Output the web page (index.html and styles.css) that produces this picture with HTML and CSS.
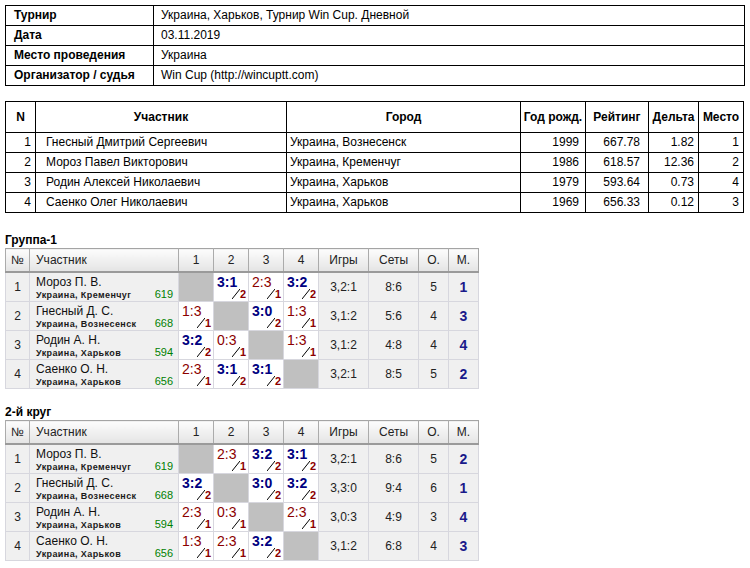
FILE: index.html
```html
<!DOCTYPE html>
<html lang="ru">
<head>
<meta charset="utf-8">
<title>Турнир Win Cup</title>
<link rel="stylesheet" href="styles.css">
</head>
<body>
<table class="info">
  <colgroup><col class="info-k"><col></colgroup>
  <tr><th>Турнир</th><td>Украина, Харьков, Турнир Win Cup. Дневной</td></tr>
  <tr><th>Дата</th><td>03.11.2019</td></tr>
  <tr><th>Место проведения</th><td>Украина</td></tr>
  <tr><th>Организатор / судья</th><td>Win Cup (http://wincuptt.com)</td></tr>
</table>

<table class="players">
  <colgroup>
    <col class="p-n"><col class="p-name"><col class="p-city"><col class="p-year"><col class="p-rate"><col class="p-delta"><col class="p-place">
  </colgroup>
  <tr><th>N</th><th>Участник</th><th>Город</th><th>Год рожд.</th><th>Рейтинг</th><th>Дельта</th><th>Место</th></tr>
  <tr><td class="n">1</td><td class="nm">Гнесный Дмитрий Сергеевич</td><td class="ct">Украина, Вознесенск</td><td class="yr">1999</td><td class="rt">667.78</td><td class="dl">1.82</td><td class="pl">1</td></tr>
  <tr><td class="n">2</td><td class="nm">Мороз Павел Викторович</td><td class="ct">Украина, Кременчуг</td><td class="yr">1986</td><td class="rt">618.57</td><td class="dl">12.36</td><td class="pl">2</td></tr>
  <tr><td class="n">3</td><td class="nm">Родин Алексей Николаевич</td><td class="ct">Украина, Харьков</td><td class="yr">1979</td><td class="rt">593.64</td><td class="dl">0.73</td><td class="pl">4</td></tr>
  <tr><td class="n">4</td><td class="nm">Саенко Олег Николаевич</td><td class="ct">Украина, Харьков</td><td class="yr">1969</td><td class="rt">656.33</td><td class="dl">0.12</td><td class="pl">3</td></tr>
</table>

<section class="group first">
  <h3 class="group-title">Группа-1</h3>
  <table class="rr">
    <colgroup>
      <col class="r-num"><col class="r-name"><col class="r-sc"><col class="r-sc"><col class="r-sc"><col class="r-sc"><col class="r-g"><col class="r-g"><col class="r-o"><col class="r-o">
    </colgroup>
    <thead>
      <tr><th>№</th><th class="h-name">Участник</th><th>1</th><th>2</th><th>3</th><th>4</th><th>Игры</th><th>Сеты</th><th>О.</th><th>М.</th></tr>
    </thead>
    <tbody>
      <tr>
        <td>1</td>
        <td class="c-name"><div class="pname">Мороз П. В.</div><div class="pinfo"><span class="city">Украина, Кременчуг</span><span class="rating">619</span></div></td>
        <td class="self"></td>
        <td class="sc win"><div class="score">3:1</div><div class="sets"><svg viewBox="0 0 8 10"><line x1="0" y1="10" x2="8" y2="0"/></svg><b>2</b></div></td>
        <td class="sc loss"><div class="score">2:3</div><div class="sets"><svg viewBox="0 0 8 10"><line x1="0" y1="10" x2="8" y2="0"/></svg><b>1</b></div></td>
        <td class="sc win"><div class="score">3:2</div><div class="sets"><svg viewBox="0 0 8 10"><line x1="0" y1="10" x2="8" y2="0"/></svg><b>2</b></div></td>
        <td>3,2:1</td><td>8:6</td><td>5</td><td class="place">1</td>
      </tr>
      <tr>
        <td>2</td>
        <td class="c-name"><div class="pname">Гнесный Д. С.</div><div class="pinfo"><span class="city">Украина, Вознесенск</span><span class="rating">668</span></div></td>
        <td class="sc loss"><div class="score">1:3</div><div class="sets"><svg viewBox="0 0 8 10"><line x1="0" y1="10" x2="8" y2="0"/></svg><b>1</b></div></td>
        <td class="self"></td>
        <td class="sc win"><div class="score">3:0</div><div class="sets"><svg viewBox="0 0 8 10"><line x1="0" y1="10" x2="8" y2="0"/></svg><b>2</b></div></td>
        <td class="sc loss"><div class="score">1:3</div><div class="sets"><svg viewBox="0 0 8 10"><line x1="0" y1="10" x2="8" y2="0"/></svg><b>1</b></div></td>
        <td>3,1:2</td><td>5:6</td><td>4</td><td class="place">3</td>
      </tr>
      <tr>
        <td>3</td>
        <td class="c-name"><div class="pname">Родин А. Н.</div><div class="pinfo"><span class="city">Украина, Харьков</span><span class="rating">594</span></div></td>
        <td class="sc win"><div class="score">3:2</div><div class="sets"><svg viewBox="0 0 8 10"><line x1="0" y1="10" x2="8" y2="0"/></svg><b>2</b></div></td>
        <td class="sc loss"><div class="score">0:3</div><div class="sets"><svg viewBox="0 0 8 10"><line x1="0" y1="10" x2="8" y2="0"/></svg><b>1</b></div></td>
        <td class="self"></td>
        <td class="sc loss"><div class="score">1:3</div><div class="sets"><svg viewBox="0 0 8 10"><line x1="0" y1="10" x2="8" y2="0"/></svg><b>1</b></div></td>
        <td>3,1:2</td><td>4:8</td><td>4</td><td class="place">4</td>
      </tr>
      <tr>
        <td>4</td>
        <td class="c-name"><div class="pname">Саенко О. Н.</div><div class="pinfo"><span class="city">Украина, Харьков</span><span class="rating">656</span></div></td>
        <td class="sc loss"><div class="score">2:3</div><div class="sets"><svg viewBox="0 0 8 10"><line x1="0" y1="10" x2="8" y2="0"/></svg><b>1</b></div></td>
        <td class="sc win"><div class="score">3:1</div><div class="sets"><svg viewBox="0 0 8 10"><line x1="0" y1="10" x2="8" y2="0"/></svg><b>2</b></div></td>
        <td class="sc win"><div class="score">3:1</div><div class="sets"><svg viewBox="0 0 8 10"><line x1="0" y1="10" x2="8" y2="0"/></svg><b>2</b></div></td>
        <td class="self"></td>
        <td>3,2:1</td><td>8:5</td><td>5</td><td class="place">2</td>
      </tr>
    </tbody>
  </table>
</section>

<section class="group second">
  <h3 class="group-title">2-й круг</h3>
  <table class="rr">
    <colgroup>
      <col class="r-num"><col class="r-name"><col class="r-sc"><col class="r-sc"><col class="r-sc"><col class="r-sc"><col class="r-g"><col class="r-g"><col class="r-o"><col class="r-o">
    </colgroup>
    <thead>
      <tr><th>№</th><th class="h-name">Участник</th><th>1</th><th>2</th><th>3</th><th>4</th><th>Игры</th><th>Сеты</th><th>О.</th><th>М.</th></tr>
    </thead>
    <tbody>
      <tr>
        <td>1</td>
        <td class="c-name"><div class="pname">Мороз П. В.</div><div class="pinfo"><span class="city">Украина, Кременчуг</span><span class="rating">619</span></div></td>
        <td class="self"></td>
        <td class="sc loss"><div class="score">2:3</div><div class="sets"><svg viewBox="0 0 8 10"><line x1="0" y1="10" x2="8" y2="0"/></svg><b>1</b></div></td>
        <td class="sc win"><div class="score">3:2</div><div class="sets"><svg viewBox="0 0 8 10"><line x1="0" y1="10" x2="8" y2="0"/></svg><b>2</b></div></td>
        <td class="sc win"><div class="score">3:1</div><div class="sets"><svg viewBox="0 0 8 10"><line x1="0" y1="10" x2="8" y2="0"/></svg><b>2</b></div></td>
        <td>3,2:1</td><td>8:6</td><td>5</td><td class="place">2</td>
      </tr>
      <tr>
        <td>2</td>
        <td class="c-name"><div class="pname">Гнесный Д. С.</div><div class="pinfo"><span class="city">Украина, Вознесенск</span><span class="rating">668</span></div></td>
        <td class="sc win"><div class="score">3:2</div><div class="sets"><svg viewBox="0 0 8 10"><line x1="0" y1="10" x2="8" y2="0"/></svg><b>2</b></div></td>
        <td class="self"></td>
        <td class="sc win"><div class="score">3:0</div><div class="sets"><svg viewBox="0 0 8 10"><line x1="0" y1="10" x2="8" y2="0"/></svg><b>2</b></div></td>
        <td class="sc win"><div class="score">3:2</div><div class="sets"><svg viewBox="0 0 8 10"><line x1="0" y1="10" x2="8" y2="0"/></svg><b>2</b></div></td>
        <td>3,3:0</td><td>9:4</td><td>6</td><td class="place">1</td>
      </tr>
      <tr>
        <td>3</td>
        <td class="c-name"><div class="pname">Родин А. Н.</div><div class="pinfo"><span class="city">Украина, Харьков</span><span class="rating">594</span></div></td>
        <td class="sc loss"><div class="score">2:3</div><div class="sets"><svg viewBox="0 0 8 10"><line x1="0" y1="10" x2="8" y2="0"/></svg><b>1</b></div></td>
        <td class="sc loss"><div class="score">0:3</div><div class="sets"><svg viewBox="0 0 8 10"><line x1="0" y1="10" x2="8" y2="0"/></svg><b>1</b></div></td>
        <td class="self"></td>
        <td class="sc loss"><div class="score">2:3</div><div class="sets"><svg viewBox="0 0 8 10"><line x1="0" y1="10" x2="8" y2="0"/></svg><b>1</b></div></td>
        <td>3,0:3</td><td>4:9</td><td>3</td><td class="place">4</td>
      </tr>
      <tr>
        <td>4</td>
        <td class="c-name"><div class="pname">Саенко О. Н.</div><div class="pinfo"><span class="city">Украина, Харьков</span><span class="rating">656</span></div></td>
        <td class="sc loss"><div class="score">1:3</div><div class="sets"><svg viewBox="0 0 8 10"><line x1="0" y1="10" x2="8" y2="0"/></svg><b>1</b></div></td>
        <td class="sc loss"><div class="score">2:3</div><div class="sets"><svg viewBox="0 0 8 10"><line x1="0" y1="10" x2="8" y2="0"/></svg><b>1</b></div></td>
        <td class="sc win"><div class="score">3:2</div><div class="sets"><svg viewBox="0 0 8 10"><line x1="0" y1="10" x2="8" y2="0"/></svg><b>2</b></div></td>
        <td class="self"></td>
        <td>3,1:2</td><td>6:8</td><td>4</td><td class="place">3</td>
      </tr>
    </tbody>
  </table>
</section>
</body>
</html>
```

FILE: styles.css
```css
html, body {
  margin: 0;
  background: #fff;
}
body {
  padding: 5px;
  font-family: "Liberation Sans", Arial, sans-serif;
  font-size: 12px;
  color: #000;
}

/* info table */
.info {
  border-collapse: collapse;
  width: 740px;
  table-layout: fixed;
}
.info-k { width: 148px; }
.info th, .info td {
  border: 1px solid #000;
  height: 19px;
  padding: 0 0 0 7px;
  line-height: 19px;
  text-align: left;
  white-space: nowrap;
}
.info th { padding-left: 8px; font-weight: bold; }

/* players table */
.players {
  border-collapse: collapse;
  width: 739px;
  table-layout: fixed;
  margin-top: 15px;
}
.p-n { width: 30px; }
.p-name { width: 251px; }
.p-city { width: 234px; }
.p-year { width: 65px; }
.p-rate { width: 63px; }
.p-delta { width: 50px; }
.p-place { width: 45px; }
.players th, .players td {
  border: 1px solid #000;
  padding: 0;
  white-space: nowrap;
}
.players th {
  height: 30px;
  font-weight: bold;
  text-align: center;
}
.players td {
  height: 19px;
  line-height: 19px;
}
.players .n { text-align: right; padding-right: 4px; }
.players .nm { padding-left: 10px; }
.players .ct { padding-left: 3px; }
.players .yr { text-align: right; padding-right: 6px; }
.players .rt { text-align: right; padding-right: 8px; }
.players .dl { text-align: right; padding-right: 4px; }
.players .pl { text-align: right; padding-right: 4px; }

/* groups */
.group.first { margin-top: 20px; }
.group.second { margin-top: 16px; }
.group-title {
  margin: 0 0 1px;
  font-size: 12px;
  line-height: 14px;
  font-weight: bold;
}

.rr {
  border-collapse: collapse;
  table-layout: fixed;
  width: 474px;
  border: 1px solid #a4a4a4;
  color: #222;
}
.r-num { width: 24px; }
.r-name { width: 149px; }
.r-sc { width: 35px; }
.r-g { width: 50px; }
.r-o { width: 30px; }

.rr th {
  height: 22px;
  padding: 0;
  font-weight: normal;
  font-size: 12px;
  color: #222;
  background: linear-gradient(#fcfcfc, #e4e4e4);
  border-left: 1px solid #ababab;
  border-bottom: 2px solid #9a9a9a;
  text-align: center;
}
.rr th.h-name { text-align: left; padding-left: 6px; }

.rr td {
  height: 28px;
  padding: 0;
  border: 1px solid #d7d7de;
  background: #f0f0f0;
  text-align: center;
  font-size: 12px;
  color: #222;
}

.rr td.c-name {
  text-align: left;
  vertical-align: top;
  padding: 0 5px 0 6px;
}
.pname {
  font-size: 12px;
  line-height: 14px;
  height: 14px;
  padding-top: 2px;
  color: #111;
}
.pinfo {
  display: flex;
  justify-content: space-between;
  align-items: baseline;
  height: 11px;
  line-height: 11px;
  overflow: visible;
}
.city {
  font-size: 9px;
  font-weight: bold;
  letter-spacing: 0.4px;
  color: #1a1a1a;
}
.rating {
  font-size: 11px;
  color: #008000;
}

.rr td.self { background: #c0c0c0; }

.rr td.sc {
  background: #fff;
  text-align: left;
  vertical-align: top;
}
.score {
  font-size: 14px;
  line-height: 13px;
  height: 13px;
  padding: 3px 0 0 3px;
}
.win .score { color: #000080; font-weight: bold; }
.loss .score { color: #8b0000; }
.sets {
  display: flex;
  justify-content: flex-end;
  align-items: flex-end;
  height: 10px;
  padding-right: 2px;
}
.sets svg {
  width: 8px;
  height: 10px;
}
.sets svg line {
  stroke: #000;
  stroke-width: 1;
}
.sets b {
  font-size: 11px;
  line-height: 9px;
  color: #8b0000;
}

.rr td.place {
  font-weight: bold;
  font-size: 14px;
  color: #1a1a8a;
}
```
